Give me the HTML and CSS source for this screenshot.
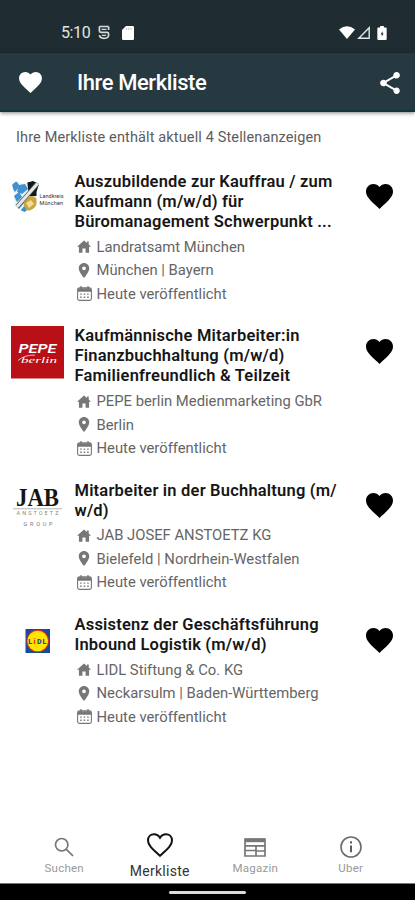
FILE: index.html
```html
<!DOCTYPE html>
<html lang="de">
<head>
<meta charset="utf-8">
<title>Ihre Merkliste</title>
<link rel="stylesheet" href="styles.css">
</head>
<body>
<svg class="defs" aria-hidden="true">
  <symbol id="heart" viewBox="2 3 20 18.35"><path d="M12 21.35l-1.45-1.32C5.4 15.36 2 12.28 2 8.5 2 5.42 4.42 3 7.5 3c1.74 0 3.41.81 4.5 2.09C13.09 3.81 14.76 3 16.5 3 19.58 3 22 5.42 22 8.5c0 3.78-3.4 6.86-8.55 11.54L12 21.35z"/></symbol>
  <symbol id="home" viewBox="0 0 16 14"><path d="M8 0 0 7.2h2.2V14h4V9.2h3.6V14h4V7.2H16l-2.6-2.4V1.2h-2v1.9z"/></symbol>
  <symbol id="pin" viewBox="5 2 14 20"><path d="M12 2C8.13 2 5 5.13 5 9c0 5.25 7 13 7 13s7-7.75 7-13c0-3.87-3.13-7-7-7zm0 9.5a2.5 2.5 0 0 1 0-5 2.5 2.5 0 0 1 0 5z"/></symbol>
  <symbol id="calendar" viewBox="0 0 15 15"><rect x=".6" y="1.9" width="13.8" height="12.5" rx="1.8" fill="none" stroke="currentColor" stroke-width="1.1"/><path d="M1 2.2h13v3.6H1zM3.2.2h1.6v2H3.2zM10.2.2h1.6v2h-1.6zM3.2 7.4h1.5v1.4H3.2zM6.7 7.4h1.5v1.4H6.7zM10.2 7.4h1.5v1.4h-1.5zM3.2 10.6h1.5V12H3.2zM6.7 10.6h1.5V12H6.7zM10.2 10.6h1.5V12h-1.5z"/></symbol>
</svg>

<div class="status">
  <span class="clock">5:10</span>
  <svg class="debug" viewBox="0 0 12 15"><path d="M10.600 1.500H2.200Q1.400 1.500 1.400 2.500V5.800Q1.400 7.400 3 7.400H9.200Q10.600 7.400 10.600 9V10.500Q10.200 13.300 6 13.300 1.800 13.300 1.400 10.200M10.600 1.500V5" fill="none" stroke="#d5d9da" stroke-width="1.700"/><path d="M3.500 4.400h5M3.800 10.300h4.400" stroke="#d5d9da" stroke-width="1.200"/></svg>
  <svg class="sdcard" viewBox="0 0 12 14"><path d="M4 0h6.8Q12 0 12 1.2v11.6q0 1.2-1.2 1.2H1.2Q0 14 0 12.8V4z" fill="#fff"/><path d="M4.7 1.8v2M6.8 1.8v2M8.9 1.8v2" stroke="#aeb5b7" stroke-width=".9"/></svg>
  <span class="spacer"></span>
  <svg class="wifi" viewBox="0 0 16 13"><path d="M8 13 0 3.4Q8-3 16 3.4z" fill="#fff"/></svg>
  <svg class="signal" viewBox="0 0 13 13"><path d="M1.8 12.2h10.4V1.8z" fill="none" stroke="#e4e7e8" stroke-width="1.4"/></svg>
  <svg class="battery" viewBox="0 0 10 15"><path d="M3 0h4v1.6h2q1 0 1 1V14q0 1-1 1H1q-1 0-1-1V2.600q0-1 1-1h2z" fill="#fff"/><path d="M5.600 5.600 3.500 8.800h1.300v2.400L6.700 8H5.600z" fill="#1f2d32"/></svg>
</div>

<header class="appbar">
  <svg class="appbar-heart"><use href="#heart"/></svg>
  <h1>Ihre Merkliste</h1>
  <svg class="share" viewBox="3 2 18 20"><path d="M18 16.080c-.76 0-1.440.3-1.960.77L8.910 12.700c.05-.23.09-.46.09-.7s-.04-.47-.09-.7l7.050-4.110c.54.5 1.250.81 2.040.81 1.660 0 3-1.340 3-3s-1.340-3-3-3-3 1.340-3 3c0 .24.04.47.09.7L8.040 9.810C7.500 9.310 6.790 9 6 9c-1.660 0-3 1.340-3 3s1.340 3 3 3c.79 0 1.500-.31 2.040-.81l7.120 4.160c-.05.21-.08.43-.08.65 0 1.610 1.310 2.920 2.920 2.920s2.920-1.310 2.920-2.920-1.310-2.920-2.920-2.920z"/></svg>
</header>

<main>
  <p class="summary">Ihre Merkliste enthält aktuell 4 Stellenanzeigen</p>

  <article class="job">
    <svg class="logo" viewBox="0 0 54 54">
      <clipPath id="shield"><path d="M1 12 5 9.500 13 11.500 22 9 28 12 25.500 20V32Q24 38 13.500 40 5 37 3 30V21z"/></clipPath>
      <g clip-path="url(#shield)">
        <path d="M0 8h30v34H0z" fill="#eef4f7"/>
        <path d="M0 14l5-5 4 5-5 6zM8 13l6-1 3 5-6 5-5-2zM3 24l5-4 3 5-5 5zM5 33l5-6 3 4-5 6zM9 39l5-6 2 5-4 4z" fill="#3f91d0"/>
        <path d="M16 8h14v16H18z" fill="#111719"/>
        <circle cx="20" cy="31.500" r="7.500" fill="#c9a63c"/>
        <path d="M15 31l5-3 3 4-5 4z" fill="#efdc98"/>
        <path d="M4 37 27 11" stroke="#555d60" stroke-width="4.500"/><path d="M4 37 27 11" stroke="#e5e8e8" stroke-width="3"/>
      </g>
      <text x="28.500" y="26" class="crest" textLength="24">Landkreis</text>
      <text x="28.500" y="32.700" class="crest" textLength="23.500">München</text>
    </svg>
    <div class="body">
      <h2>Auszubildende zur Kauffrau / zum<br>Kaufmann (m/w/d) für<br>Büromanagement Schwerpunkt ...</h2>
      <p><svg class="home"><use href="#home"/></svg><span>Landratsamt München</span></p>
      <p><svg class="pin"><use href="#pin"/></svg><span>München | Bayern</span></p>
      <p><svg class="cal"><use href="#calendar"/></svg><span>Heute veröffentlicht</span></p>
    </div>
    <svg class="fav"><use href="#heart"/></svg>
  </article>

  <article class="job">
    <svg class="logo" viewBox="0 0 54 54">
      <path d="M0 0h53v52.500H0z" fill="#b90f17"/>
      <text x="7.500" y="27" class="pepe" textLength="38" lengthAdjust="spacingAndGlyphs">PEPE</text>
      <text x="10" y="36.500" class="berlin" textLength="36" lengthAdjust="spacingAndGlyphs">berlin</text>
      <path d="M7 34.500Q13 29 24 29" fill="none" stroke="#f4c9cb" stroke-width=".9"/>
    </svg>
    <div class="body">
      <h2>Kaufmännische Mitarbeiter:in<br>Finanzbuchhaltung (m/w/d)<br>Familienfreundlich &amp; Teilzeit</h2>
      <p><svg class="home"><use href="#home"/></svg><span>PEPE berlin Medienmarketing GbR</span></p>
      <p><svg class="pin"><use href="#pin"/></svg><span>Berlin</span></p>
      <p><svg class="cal"><use href="#calendar"/></svg><span>Heute veröffentlicht</span></p>
    </div>
    <svg class="fav"><use href="#heart"/></svg>
  </article>

  <article class="job">
    <svg class="logo" viewBox="0 0 54 54">
      <text x="5" y="25" class="jab" textLength="43" lengthAdjust="spacingAndGlyphs">JAB</text>
      <path d="M2 27.800h49" stroke="#aaa" stroke-width=".9"/>
      <text x="5.500" y="34" class="anstoetz" textLength="42">ANSTOETZ</text>
      <text x="12.500" y="44.500" class="group" textLength="29">GROUP</text>
    </svg>
    <div class="body">
      <h2>Mitarbeiter in der Buchhaltung (m/<br>w/d)</h2>
      <p><svg class="home"><use href="#home"/></svg><span>JAB JOSEF ANSTOETZ KG</span></p>
      <p><svg class="pin"><use href="#pin"/></svg><span>Bielefeld | Nordrhein-Westfalen</span></p>
      <p><svg class="cal"><use href="#calendar"/></svg><span>Heute veröffentlicht</span></p>
    </div>
    <svg class="fav"><use href="#heart"/></svg>
  </article>

  <article class="job">
    <svg class="logo" viewBox="0 0 54 54">
      <path d="M14.500 14h24.500v24H14.500z" fill="#174a9c"/>
      <circle cx="26.700" cy="26" r="11.300" fill="#e02b20"/><circle cx="26.700" cy="26" r="10.300" fill="#ffe600"/>
      <text y="28.500" class="lidl"><tspan x="17.300">L</tspan><tspan x="22.500" class="red">i</tspan><tspan x="26">D</tspan><tspan x="31.500">L</tspan></text>
    </svg>
    <div class="body">
      <h2>Assistenz der Geschäftsführung<br>Inbound Logistik (m/w/d)</h2>
      <p><svg class="home"><use href="#home"/></svg><span>LIDL Stiftung &amp; Co. KG</span></p>
      <p><svg class="pin"><use href="#pin"/></svg><span>Neckarsulm | Baden-Württemberg</span></p>
      <p><svg class="cal"><use href="#calendar"/></svg><span>Heute veröffentlicht</span></p>
    </div>
    <svg class="fav"><use href="#heart"/></svg>
  </article>
</main>

<nav class="tabs">
  <a class="tab"><svg viewBox="0 0 24 24"><path d="M9.700 3.500a6.200 6.200 0 1 0 0 12.400 6.200 6.200 0 0 0 0-12.400zM14.200 14.200l6.800 6.800" fill="none" stroke="#777" stroke-width="1.700"/></svg><span>Suchen</span></a>
  <a class="tab active"><svg viewBox="0 0 28 26"><path d="M14 23.800C7 17.600 2 13.600 2 8.400 2 4.800 4.600 2.200 8 2.200c2.400 0 4.700 1.300 6 3.500 1.300-2.200 3.600-3.500 6-3.500 3.400 0 6 2.600 6 6.200 0 5.200-5 9.200-12 15.400z" fill="none" stroke="#111" stroke-width="2"/></svg><span>Merkliste</span></a>
  <a class="tab"><svg viewBox="0 0 24 24"><path d="M2 4h20v17H2zM2 10.800h20M2 15.500h11M13 11v10M13 16h9" fill="none" stroke="#777" stroke-width="1.700"/><path d="M2 3.500h20v3.700H2z" fill="#777"/></svg><span>Magazin</span></a>
  <a class="tab"><svg viewBox="0 0 24 24"><circle cx="12" cy="12" r="10" fill="none" stroke="#6b6b6b" stroke-width="1.600"/><path d="M12 10.500v6.800M12 6.300v2.200" stroke="#555" stroke-width="1.900"/></svg><span>Uber</span></a>
</nav>
<div class="gesture"><div class="pill"></div></div>
</body>
</html>
```

FILE: styles.css
```css
* { box-sizing: border-box; margin: 0; padding: 0; }
body { width: 415px; height: 900px; overflow: hidden; background: #fff; display: flex; flex-direction: column; font-family: Roboto, sans-serif; }
svg { display: block; flex: none; }
.defs { width: 0; height: 0; position: absolute; }

.status { flex: none; height: 53px; padding: 12px 28px 0 61px; background: #1f2d32; display: flex; align-items: center; }
.clock { width: 30px; color: #e1e5e6; font-size: 16px; letter-spacing: -.4px; }
.debug { width: 12px; height: 15px; margin-left: 7px; }
.sdcard { width: 12px; height: 14px; margin-left: 12px; }
.spacer { flex: 1; }
.wifi { width: 16px; height: 13px; }
.signal { width: 13px; height: 13px; margin-left: 2px; }
.battery { width: 10px; height: 14px; margin-left: 7px; }

.appbar { position: relative; z-index: 1; flex: none; height: 59px; padding: 2px 15px 0 19px; background: #263940; border-bottom: 2px solid #173438; box-shadow: 0 1px 4px rgba(0,0,0,.5); display: flex; align-items: center; }
.appbar-heart { width: 23px; height: 21px; fill: #fff; }
h1 { flex: 1; margin-left: 35px; color: #fff; font-size: 22px; font-weight: 500; letter-spacing: -.42px; }
.share { width: 20px; height: 22px; fill: #fff; }

main { flex: 1; padding: 15px 22px 0 11px; }
.summary { height: 20px; line-height: 21px; margin-left: 5px; font-size: 14.500px; letter-spacing: .13px; color: #5c5c5c; white-space: nowrap; }
.job { display: flex; align-items: flex-start; margin-top: 20.900px; }
.summary + .job { margin-top: 24.900px; }
.logo { width: 54px; height: 54px; }
.body { flex: 1; padding-left: 9.500px; }
h2 { font-size: 16.500px; line-height: 20px; font-weight: 600; color: #161616; white-space: nowrap; margin-bottom: 3px; letter-spacing: .2px; }
.body p { height: 23.500px; display: flex; align-items: center; color: #656565; font-size: 14.800px; white-space: nowrap; }
.body p svg { fill: #777; color: #777; }
.body p span { margin-left: auto; width: 269.500px; }
.home { width: 14px; height: 13px; margin-left: 2.500px; }
.pin { width: 12px; height: 15px; margin-left: 3.500px; }
.cal { width: 15px; height: 15px; margin-left: 2px; }
.fav { width: 27px; height: 25px; margin-top: 12.500px; fill: #000; }

.crest { font-size: 5.500px; fill: #333; }
.pepe { font-size: 12.500px; font-weight: 600; font-style: italic; fill: #fff; }
.berlin { font-family: "Liberation Serif", serif; font-size: 9px; font-style: italic; fill: #fff; }
.jab { font-family: "Liberation Serif", serif; font-size: 25px; font-weight: 700; fill: #151515; }
.anstoetz { font-size: 5.500px; fill: #888; }
.group { font-size: 5.500px; fill: #777; }
.lidl { font-size: 7px; font-weight: 900; fill: #174a9c; }
.red { fill: #e02b20; }

.tabs { flex: none; height: 60px; padding: 0 16.500px; display: flex; }
.tab { flex: 1; display: flex; flex-direction: column; align-items: center; color: #999; font-size: 11.500px; padding-top: 12px; }
.tab svg { width: 24px; height: 24px; }
.tab span { line-height: 14px; margin-top: 2px; letter-spacing: .25px; }
.tab.active { color: #333; font-size: 14px; padding-top: 9px; }
.tab.active svg { width: 28px; height: 26px; }
.tab.active span { line-height: 17px; margin-top: 5px; }
.gesture { flex: none; height: 17px; background: #000; border-top: 1px solid #777; display: flex; justify-content: center; padding-top: 7px; }
.pill { width: 77px; height: 3px; border-radius: 2px; background: #ddd; }
```
